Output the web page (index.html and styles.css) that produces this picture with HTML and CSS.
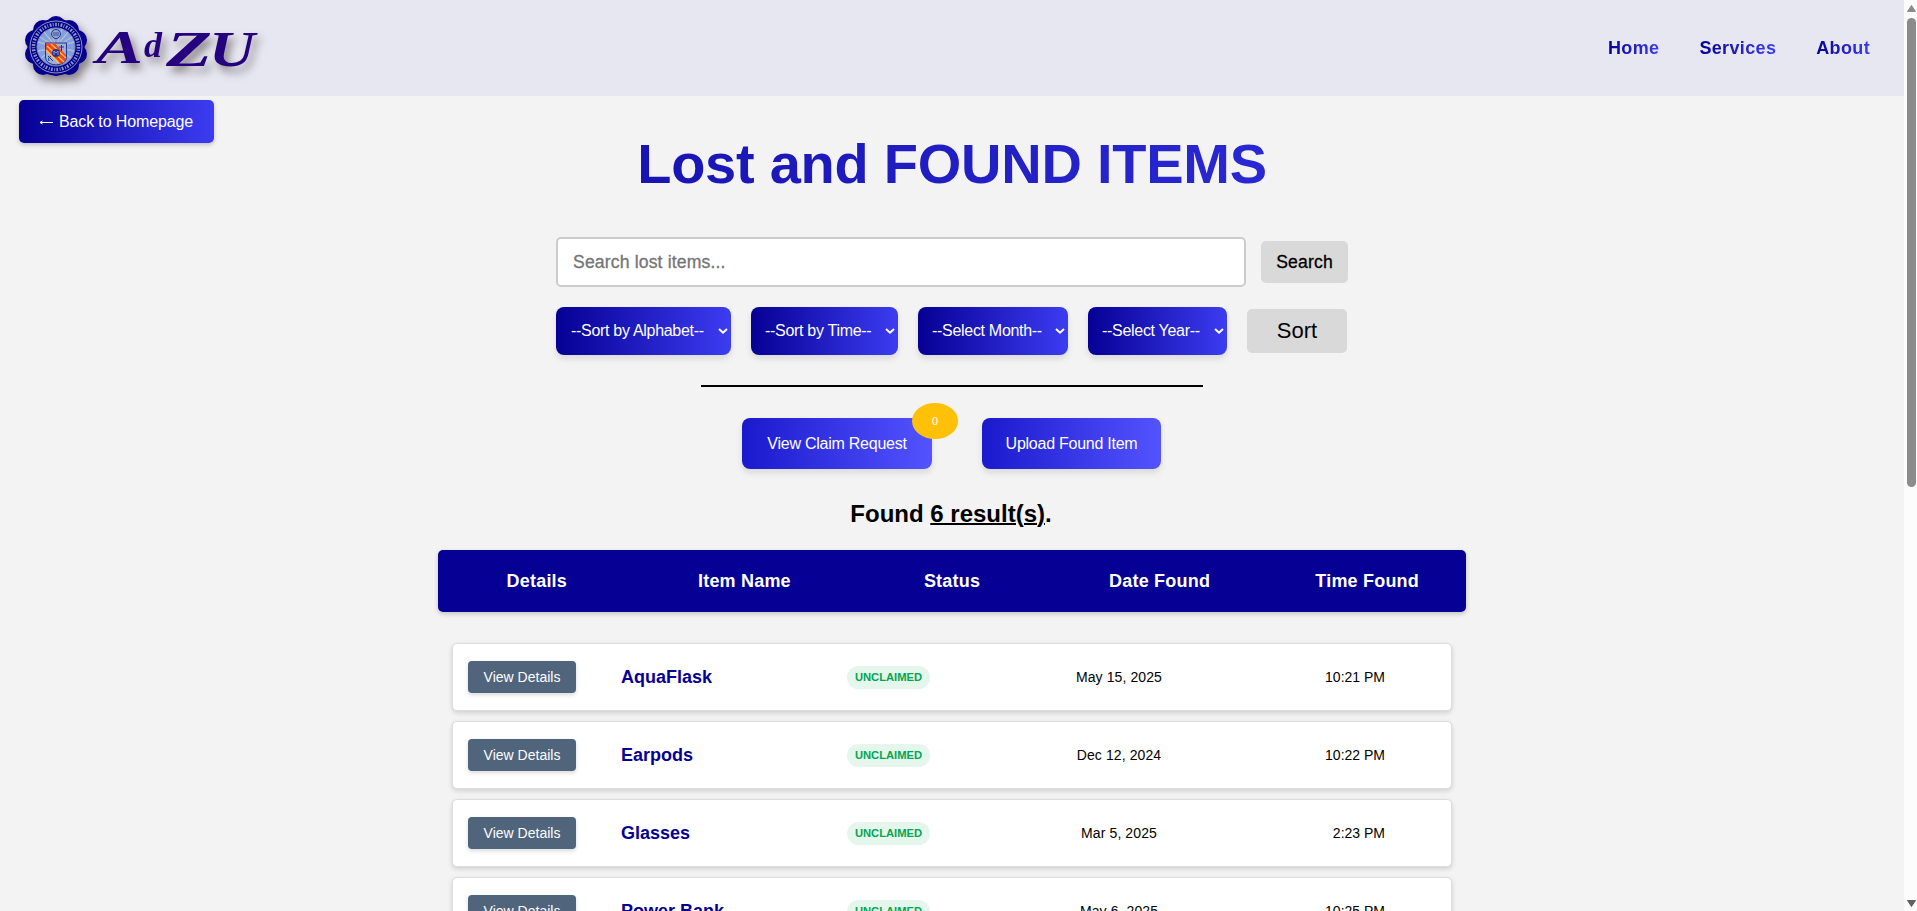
FILE: index.html
```html
<!DOCTYPE html>
<html lang="en">
<head>
<meta charset="utf-8">
<title>Lost and Found Items</title>
<link rel="stylesheet" href="styles.css">
</head>
<body>
<div class="page">
  <header class="header">
    <svg class="logo" width="260" height="96" viewBox="0 0 260 96">
      <g transform="translate(56 47)">
        <g fill="#06008f">
          <circle r="28.500"/>
          <circle cx="0" cy="-21" r="10"/><circle cx="13" cy="-17" r="10"/><circle cx="21" cy="-7" r="10"/><circle cx="21" cy="7" r="10"/><circle cx="13" cy="18" r="10"/><circle cx="0" cy="19" r="10"/><circle cx="-13" cy="18" r="10"/><circle cx="-21" cy="7" r="10"/><circle cx="-21" cy="-7" r="10"/><circle cx="-13" cy="-17" r="10"/>
        </g>
        <circle r="26" fill="none" stroke="#8c98c4" stroke-width="1"/>
        <circle r="22.500" fill="none" stroke="#8c98c4" stroke-width="3.500" stroke-dasharray="1.700 1.300 .9 1.600"/>
        <circle r="19" fill="#7f9fe0" stroke="#7f8cbc" stroke-width="1"/>
        <path d="M0 0L-18 -5M0 0L-16 -10M0 0L-12 -15M0 0L-6 -18M0 0L6 -18M0 0L12 -15M0 0L16 -10M0 0L18 -5M0 0L-18 4M0 0L18 4M0 0L-15 11M0 0L15 11" stroke="#b0bccb" stroke-width="1.400"/>
        <circle cy="-13" r="4.500" fill="#93a5cf" stroke="#26348f"/>
        <path d="M-2 -11V-15M0 -11V-15M2 -11V-15" stroke="#26348f" stroke-width=".8"/>
        <path d="M-10.500 -4H10.500V10Q10.500 17 0 18Q-10.500 17 -10.500 10Z" fill="#9db1d8" stroke="#26348f"/>
        <path d="M-10 -3.500H-1L10 8V13L5 17L-10 4Z" fill="#f4421c"/>
        <path d="M-9 -1L8 15M-5 -3L10 11M-10 3L3 16" stroke="#ffc34a" stroke-width="1.500"/>
        <circle cy="6" r="4" fill="#26348f"/>
        <path d="M-2 8V4L0 6L2 4V8" fill="none" stroke="#8fa4d4" stroke-width=".9"/>
        <path d="M5.500 -2V4M3 0H8M-8 9L-3 14M-5 9Q-9 11 -7 14" fill="none" stroke="#26348f"/>
      </g>
      <g class="wordmark">
        <text x="96" y="63" font-size="46" textLength="47" lengthAdjust="spacingAndGlyphs">A</text>
        <text x="144" y="57" font-size="36" textLength="18" lengthAdjust="spacingAndGlyphs">d</text>
        <text x="166" y="66" font-size="50" textLength="46" lengthAdjust="spacingAndGlyphs">Z</text>
        <text x="209" y="66" font-size="50" textLength="46" lengthAdjust="spacingAndGlyphs">U</text>
      </g>
    </svg>
    <nav class="nav"><a class="n1">Home</a><a class="n2">Services</a><a class="n3">About</a></nav>
  </header>
  <a class="back"><svg width="15" height="9" viewBox="0 0 15 9"><path d="M1 5.500H14M1 5.500L3.500 4M1 5.500L3.500 7" fill="none" stroke="#fff" stroke-width="1"/></svg><span>Back to Homepage</span></a>
  <h1 class="title"><span>Lost and FOUND ITEMS</span></h1>
  <main class="main">
    <div class="search-row">
      <div class="search-box"><span>Search lost items...</span></div>
      <button class="btn-search"><span>Search</span></button>
    </div>
    <div class="sort-row">
      <div class="select s1"><span>--Sort by Alphabet--</span><svg width="10" height="8" viewBox="0 0 10 8"><path d="M1 2L5 5.700L9 2"/></svg></div>
      <div class="select s2"><span>--Sort by Time--</span><svg width="10" height="8" viewBox="0 0 10 8"><path d="M1 2L5 5.700L9 2"/></svg></div>
      <div class="select s3"><span>--Select Month--</span><svg width="10" height="8" viewBox="0 0 10 8"><path d="M1 2L5 5.700L9 2"/></svg></div>
      <div class="select s4"><span>--Select Year--</span><svg width="10" height="8" viewBox="0 0 10 8"><path d="M1 2L5 5.700L9 2"/></svg></div>
      <button class="btn-sort">Sort</button>
    </div>
    <div class="rule"></div>
    <div class="actions">
      <a class="action a1"><span>View Claim Request</span><b class="count">0</b></a>
      <a class="action a2"><span>Upload Found Item</span></a>
    </div>
    <p class="found"><span>Found <u>6 result(s)</u>.</span></p>
    <div class="thead"><span>Details</span><span>Item Name</span><span>Status</span><span>Date Found</span><span>Time Found</span></div>
    <div class="rows">
      <div class="card"><a class="view">View Details</a><span class="name">AquaFlask</span><span class="badge">UNCLAIMED</span><span class="date">May 15, 2025</span><span class="time">10:21 PM</span></div>
      <div class="card"><a class="view">View Details</a><span class="name">Earpods</span><span class="badge">UNCLAIMED</span><span class="date">Dec 12, 2024</span><span class="time">10:22 PM</span></div>
      <div class="card"><a class="view">View Details</a><span class="name">Glasses</span><span class="badge">UNCLAIMED</span><span class="date">Mar 5, 2025</span><span class="time">2:23 PM</span></div>
      <div class="card"><a class="view">View Details</a><span class="name">Power Bank</span><span class="badge">UNCLAIMED</span><span class="date">May 6, 2025</span><span class="time">10:25 PM</span></div>
    </div>
  </main>
</div>
<div class="scrollbar">
  <svg width="9" height="7" viewBox="0 0 9 7"><path d="M4.500 .5L8.500 6.500H.5Z" fill="#8b8b8b" stroke="#8b8b8b" stroke-linejoin="round"/></svg>
  <div class="thumb"></div>
  <svg class="down" width="9" height="7" viewBox="0 0 9 7"><path d="M4.500 6.500L8.500 .5H.5Z" fill="#606060" stroke="#606060" stroke-linejoin="round"/></svg>
</div>
</body>
</html>
```
FILE: styles.css
```css
* { box-sizing: border-box; }
body { margin: 0; height: 911px; overflow: hidden; display: flex; background: #f3f3f3; font: 16px "Liberation Sans", Arial, sans-serif; color: #000; }
button { border: 0; padding: 0; font-family: inherit; color: #000; }
.page { width: 1904px; height: 911px; overflow: hidden; flex: none; }
.header { height: 96px; background: #e7e7f1; display: flex; justify-content: space-between; align-items: center; padding-right: 34px; }
.logo { filter: drop-shadow(4px 6px 4px rgba(60, 50, 50, .55)); }
.wordmark { font-family: "Liberation Serif", serif; font-weight: bold; font-style: italic; fill: #25007f; }
.nav { display: flex; gap: 40px; font-size: 18px; font-weight: bold; line-height: 20px; letter-spacing: .35px; }
.nav a { background: linear-gradient(to right, #060094, #3c3cf2); -webkit-background-clip: text; background-clip: text; color: transparent; white-space: nowrap; }
.back { display: flex; align-items: center; gap: 5px; width: 195px; height: 43px; margin: 4px 0 0 19px; padding-left: 20px; border-radius: 5px; color: #fff; background: linear-gradient(to right, #060094, #3c3cf2); box-shadow: 0 2px 4px rgba(0, 0, 0, .2); white-space: nowrap; letter-spacing: -.13px; }
.title { margin: -11px 0 0; height: 64px; line-height: 64px; font-size: 56px; letter-spacing: -.25px; text-align: center; background: linear-gradient(to right, #060094, #3c3cf2); -webkit-background-clip: text; background-clip: text; color: transparent; }
.main { display: flex; flex-direction: column; align-items: center; padding-top: 41px; }
.search-row { display: flex; align-items: center; gap: 15px; height: 50px; }
.search-box { width: 690px; height: 50px; border: 2px solid #ccc; border-radius: 5px; background: #fff; padding-left: 15px; display: flex; align-items: center; font-size: 17.600px; letter-spacing: .15px; color: #757575; }
.btn-search { width: 87px; height: 42px; border-radius: 5px; background: #d9d9d9; font-size: 17.600px; letter-spacing: .15px; }
.search-box span, .btn-search span { -webkit-text-stroke: .3px currentColor; }
.sort-row { display: flex; align-items: center; gap: 20px; height: 48px; margin: 20px 1px 0 0; }
.select { height: 48px; border-radius: 8px; color: #fff; display: flex; align-items: center; justify-content: space-between; padding: 0 3px 0 15px; background: linear-gradient(to right, #060094, #3c3cf2); box-shadow: 0 4px 6px rgba(0, 0, 0, .1); white-space: nowrap; letter-spacing: -.3px; }
.select path { fill: none; stroke: #fff; stroke-width: 2; }
.s1 { width: 175px; } .s2 { width: 147px; } .s3 { width: 150px; } .s4 { width: 139px; }
.s2, .s3, .s4 { padding-left: 14px; }
.btn-sort { width: 100px; height: 44px; border-radius: 5px; background: #d9d9d9; font-size: 22px; }
.rule { width: 502px; height: 2px; margin-top: 30px; background: #000; }
.actions { display: flex; gap: 50px; margin: 31px 1px 0 0; }
.action { position: relative; height: 51px; border-radius: 8px; display: flex; align-items: center; justify-content: center; color: #fff; background: linear-gradient(to right, #1a1acd, #5353ff); box-shadow: 0 4px 6px rgba(0, 0, 0, .1); white-space: nowrap; letter-spacing: -.25px; }
.a1 { width: 190px; } .a2 { width: 179px; }
.count { position: absolute; right: -26px; top: -15px; width: 46px; height: 36px; border-radius: 50%; background: #ffc107; font-size: 11px; font-weight: normal; line-height: 36px; text-align: center; }
.found { margin: 31px 2px 0 0; height: 28px; line-height: 28px; font-size: 24px; font-weight: bold; }
.found u { text-decoration-thickness: 2px; }
.thead { width: 1028px; height: 62px; margin-top: 22px; border-radius: 5px; background: #060094; color: #fff; font-size: 18px; font-weight: bold; letter-spacing: .2px; display: grid; grid-template-columns: repeat(5, 207.600px); justify-content: center; align-items: center; text-align: center; box-shadow: 0 2px 5px rgba(0, 0, 0, .2); }
.rows { width: 1000px; margin-top: 31px; display: flex; flex-direction: column; gap: 10px; }
.card { height: 68px; background: #fff; border: 1px solid #ddd; border-radius: 5px; box-shadow: 0 2px 5px rgba(0, 0, 0, .15); display: grid; grid-template-columns: 108px 181px 83px 288px 77px; column-gap: 45px; padding-left: 15px; align-items: center; font-size: 14px; white-space: nowrap; }
.view { height: 32px; line-height: 32px; border-radius: 4px; background: #50647c; color: #fff; text-align: center; box-shadow: 0 2px 4px rgba(0, 0, 0, .15); }
.name { font-size: 18px; font-weight: bold; color: #060094; }
.badge { height: 23px; line-height: 23px; margin-top: 1px; border-radius: 12px; background: #e5f7ed; color: #00a651; font-size: 11.200px; font-weight: bold; text-align: center; }
.date { text-align: center; letter-spacing: .1px; }
.time { text-align: right; }
.scrollbar { width: 13px; height: 911px; background: #fcfcfc; display: flex; flex-direction: column; padding: 5px 0 4px 3px; }
.thumb { width: 9px; height: 469px; margin-top: 6px; border-radius: 5px; background: #8b8b8b; }
.down { margin-top: auto; }
```
